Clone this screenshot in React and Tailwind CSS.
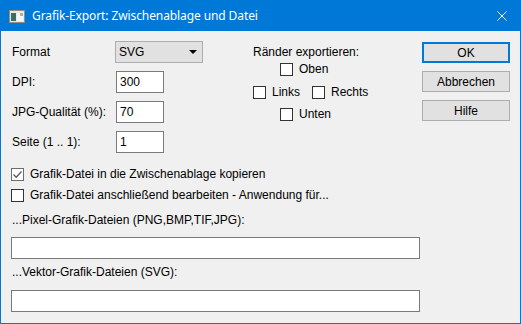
import React from 'react';

const font = { fontFamily: '"Liberation Sans", Arial, sans-serif' };

const Box = ({ checked }) => (
  <span className={`inline-flex w-[13px] h-[13px] shrink-0 items-center justify-center bg-white border ${checked ? 'border-[#6d6d6d]' : 'border-[#333333]'}`}>
    {checked && (
      <svg width="11" height="11" viewBox="0 0 11 11">
        <path d="M1.5 5.5 L4.2 8.2 L9.5 2.5" fill="none" stroke="#5a5a5a" strokeWidth="1.3" />
      </svg>
    )}
  </span>
);

const Check = ({ label, checked, className = '' }) => (
  <div className={`flex items-center gap-[6px] h-[14px] ${className}`}>
    <Box checked={checked} />
    <span>{label}</span>
  </div>
);

const Field = ({ value, className = '' }) => (
  <div className={`h-[22px] bg-white border border-[#7a7a7a] flex items-center pl-[3px] text-black ${className}`}>
    {value}
  </div>
);

const Btn = ({ children, primary }) => (
  <div className={`h-[21px] w-[88px] flex items-center justify-center bg-[#e1e1e1] ${primary ? 'border-2 border-[#0078d7]' : 'border border-[#adadad]'}`}>
    {children}
  </div>
);

export default function App() {
  return (
    <div className="w-[521px] h-[324px] border border-[#0078d7] bg-[#f0f0f0] flex flex-col text-[12px] leading-[14px] text-black overflow-hidden" style={font}>
      {/* title bar */}
      <div className="h-[30px] bg-[#0078d7] flex items-center shrink-0">
        <svg className="ml-[8px]" width="16" height="13" viewBox="0 0 16 13">
          <rect x="0.5" y="0.5" width="15" height="12" fill="#e9e9e9" stroke="#8f8f8f" />
          <rect x="2" y="3" width="5" height="8" fill="#3f6f55" />
          <rect x="8" y="3" width="6" height="8" fill="#f7f7f7" />
          <rect x="11" y="3" width="3" height="3" fill="#9fb8a8" />
        </svg>
        <span className="ml-[7px] text-white text-[12px] tracking-[-0.1px]" style={{ fontFamily: '"Noto Sans", "Open Sans", sans-serif' }}>
          Grafik-Export: Zwischenablage und Datei
        </span>
        <div className="ml-auto mr-[13px] w-[10px] h-[10px]">
          <svg width="10" height="10" viewBox="0 0 10 10">
            <path d="M0.5 0.5 L9.5 9.5 M9.5 0.5 L0.5 9.5" stroke="#ffffff" strokeWidth="1" />
          </svg>
        </div>
      </div>

      {/* upper area */}
      <div className="flex">
        <div className="ml-[11px] mt-[10px] flex flex-col gap-[8px]">
          <div className="flex items-center h-[22px]">
            <span className="w-[103px]">Format</span>
            <div className="w-[88px] h-[22px] bg-[#e1e1e1] border border-[#adadad] flex items-center pl-[3px] pr-[5px]">
              <span>SVG</span>
              <svg className="ml-auto" width="8" height="4" viewBox="0 0 8 4">
                <path d="M0 0 L8 0 L4 4 Z" fill="#000" />
              </svg>
            </div>
          </div>
          <div className="flex items-center">
            <span className="w-[104px]">DPI:</span>
            <Field value="300" className="w-[48px]" />
          </div>
          <div className="flex items-center">
            <span className="w-[104px]">JPG-Qualität (%):</span>
            <Field value="70" className="w-[48px]" />
          </div>
          <div className="flex items-center">
            <span className="w-[104px]">Seite (1 .. 1):</span>
            <Field value="1" className="w-[48px]" />
          </div>
        </div>

        <div className="ml-[50px] mt-[14px] flex flex-col">
          <span>Ränder exportieren:</span>
          <Check label="Oben" className="ml-[27px] mt-[3px]" />
          <div className="flex mt-[9px]">
            <Check label="Links" />
            <Check label="Rechts" className="ml-[12px]" />
          </div>
          <Check label="Unten" className="ml-[27px] mt-[8px]" />
        </div>

        <div className="ml-auto mr-[10px] mt-[11px] flex flex-col gap-[8px]">
          <Btn primary>OK</Btn>
          <Btn>Abbrechen</Btn>
          <Btn>Hilfe</Btn>
        </div>
      </div>

      {/* lower area */}
      <div className="ml-[10px] flex flex-col">
        <Check label="Grafik-Datei in die Zwischenablage kopieren" checked className="mt-[14px]" />
        <Check label="Grafik-Datei anschließend bearbeiten - Anwendung für..." className="mt-[7px]" />
        <span className="ml-[1px] mt-[11px]">...Pixel-Grafik-Dateien (PNG,BMP,TIF,JPG):</span>
        <Field value="" className="w-[409px] mt-[10px]" />
        <span className="ml-[1px] mt-[6px]">...Vektor-Grafik-Dateien (SVG):</span>
        <Field value="" className="w-[409px] mt-[11px]" />
      </div>
    </div>
  );
}
